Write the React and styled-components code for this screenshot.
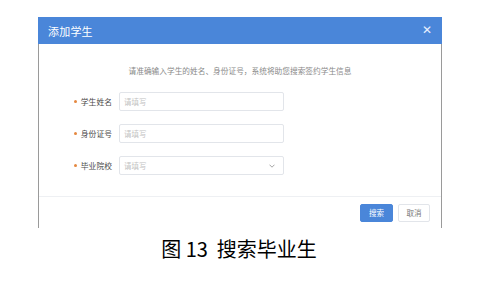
import React from "react";
import styled, { createGlobalStyle } from "styled-components";

const GlobalStyle = createGlobalStyle`
  body {
    margin: 0;
    background: #ffffff;
    font-family: "Noto Sans CJK SC", "Noto Sans", sans-serif;
  }
`;

const Page = styled.div`
  width: 479px;
  height: 281px;
  padding-top: 17px;
  box-sizing: border-box;
  overflow: hidden;
`;

const Dialog = styled.div`
  margin-left: 38px;
  width: 404px;
  height: 211px;
  box-sizing: border-box;
  border-left: 1px solid #9a9a9a;
  border-right: 1px solid #9a9a9a;
  display: flex;
  flex-direction: column;
`;

const Header = styled.div`
  height: 27px;
  background: #4a86d9;
  margin: 0 -1px;
  display: flex;
  align-items: center;
  justify-content: space-between;
  padding: 0 10px 0 10px;
  color: #ffffff;
`;

const Title = styled.span`
  font-size: 11px;
  letter-spacing: 0.2px;
`;

const Close = styled.span`
  font-size: 12px;
  line-height: 1;
  color: #e8efff;
  margin-top: -3px;
`;

const Body = styled.div`
  flex: 1;
  padding-top: 22px;
`;

const Tip = styled.div`
  text-align: center;
  font-size: 7.7px;
  color: #8a8a8a;
  line-height: 10px;
  margin-bottom: 16px;
`;

const Form = styled.div`
  display: flex;
  flex-direction: column;
  gap: 13px;
`;

const Row = styled.div`
  display: flex;
  align-items: center;
  height: 19px;
`;

const Label = styled.label`
  width: 73px;
  text-align: right;
  font-size: 7.8px;
  color: #4a4a4a;
  padding-right: 7px;
  box-sizing: content-box;
  display: flex;
  justify-content: flex-end;
  align-items: center;
`;

const Star = styled.span`
  width: 3px;
  height: 3px;
  border-radius: 50%;
  background: #e5883f;
  margin-right: 4px;
`;

const Field = styled.div`
  width: 165px;
  height: 19px;
  box-sizing: border-box;
  border: 1px solid #e2e5ea;
  border-radius: 2px;
  display: flex;
  align-items: center;
  justify-content: space-between;
  padding: 0 8px 0 4px;
  font-size: 7.5px;
  color: #c2c2c2;
`;

const Footer = styled.div`
  border-top: 1px solid #eef0f3;
  height: 31px;
  display: flex;
  justify-content: flex-end;
  align-items: center;
  gap: 5px;
  padding-right: 11px;
`;

const Button = styled.button`
  width: ${(p) => (p.primary ? "33px" : "32px")};
  height: 18px;
  border-radius: 2px;
  font-family: inherit;
  font-size: 7.5px;
  padding: 0;
  cursor: pointer;
  border: 1px solid ${(p) => (p.primary ? "#4a86d9" : "#e2e5ea")};
  background: ${(p) => (p.primary ? "#4a86d9" : "#ffffff")};
  color: ${(p) => (p.primary ? "#ffffff" : "#777")};
`;

const Caption = styled.div`
  margin-top: 7px;
  text-align: center;
  font-size: 20px;
  color: #000000;
  line-height: 28px;
  padding-right: 1px;
`;

const Chevron = () => (
  <svg width="6" height="4" viewBox="0 0 6 4">
    <path d="M0.5 0.7 L3 3.2 L5.5 0.7" fill="none" stroke="#9a9a9a" strokeWidth="0.9" />
  </svg>
);

const fields = [
  { label: "学生姓名" },
  { label: "身份证号" },
  { label: "毕业院校", select: true },
];

const App = () => (
  <>
    <GlobalStyle />
    <Page>
      <Dialog>
        <Header>
          <Title>添加学生</Title>
          <Close>✕</Close>
        </Header>
        <Body>
          <Tip>请准确输入学生的姓名、身份证号，系统将助您搜索签约学生信息</Tip>
          <Form>
            {fields.map((f) => (
              <Row key={f.label}>
                <Label>
                  <Star />
                  {f.label}
                </Label>
                <Field>
                  <span>请填写</span>
                  {f.select && <Chevron />}
                </Field>
              </Row>
            ))}
          </Form>
        </Body>
        <Footer>
          <Button primary>搜索</Button>
          <Button>取消</Button>
        </Footer>
      </Dialog>
      <Caption>图 13&nbsp; 搜索毕业生</Caption>
    </Page>
  </>
);

export default App;
